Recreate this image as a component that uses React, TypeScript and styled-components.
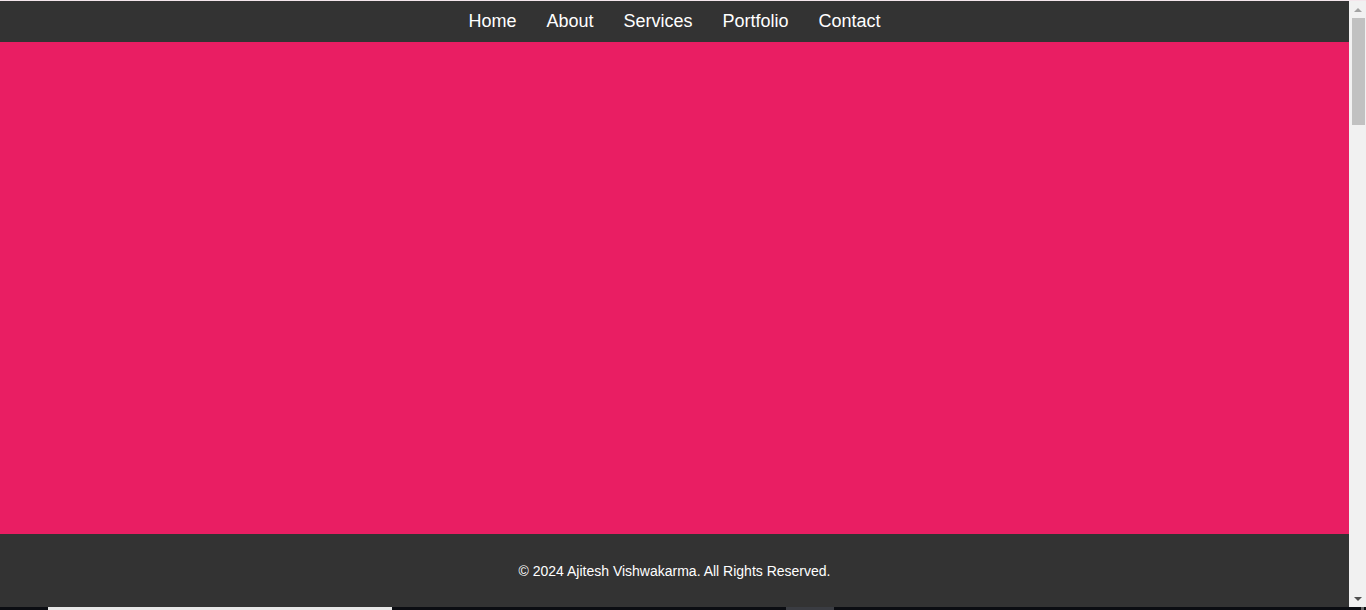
import React from "react";
import styled, { createGlobalStyle } from "styled-components";

const Global = createGlobalStyle`
  html, body {
    margin: 0;
    padding: 0;
    overflow: hidden;
  }
  body {
    font-family: "Liberation Sans", Arial, sans-serif;
    background: #0b0d12;
  }
`;

const Frame = styled.div`
  height: 610px;
  display: flex;
  flex-direction: column;
  overflow: hidden;
`;

const Window = styled.div`
  height: 607px;
  display: flex;
  border-top: 1px solid #f4e6ec;
  box-sizing: border-box;
`;

const Page = styled.main`
  flex: 1;
  display: flex;
  flex-direction: column;
  overflow: hidden;
`;

const Header = styled.header`
  background: #333333;
  height: 41px;
  flex-shrink: 0;
  display: flex;
  justify-content: center;
  align-items: center;
  padding-bottom: 2px;
  box-sizing: border-box;
`;

const Nav = styled.nav`
  display: flex;
  align-items: center;
`;

const NavLink = styled.a`
  color: #ffffff;
  font-size: 18px;
  text-decoration: none;
  padding: 0 15px;
  line-height: 20px;
  cursor: pointer;
`;

const Hero = styled.section`
  background: #e91e63;
  height: 492px;
  flex-shrink: 0;
`;

const Footer = styled.footer`
  background: #333333;
  height: 80px;
  flex-shrink: 0;
  display: flex;
  justify-content: center;
  align-items: flex-start;
  padding-top: 29px;
  box-sizing: border-box;
  color: #ffffff;
  font-size: 14px;
  line-height: 16px;
`;

const Scrollbar = styled.div`
  width: 17px;
  background: #f1f1f1;
  display: flex;
  flex-direction: column;
  align-items: center;
`;

const ArrowBtn = styled.div<{ $down?: boolean }>`
  height: 17px;
  width: 17px;
  display: flex;
  align-items: center;
  justify-content: center;
  flex-shrink: 0;
  &::after {
    content: "";
    width: 0;
    height: 0;
    border-left: 4px solid transparent;
    border-right: 4px solid transparent;
    ${(p) =>
      p.$down
        ? "border-top: 4px solid #505050;"
        : "border-bottom: 4px solid #a3a3a3;"}
  }
`;

const Track = styled.div`
  flex: 1;
  width: 100%;
  display: flex;
  justify-content: center;
`;

const Thumb = styled.div`
  width: 13px;
  height: 107px;
  margin-top: 0px;
  margin-left: 1px;
  background: #c1c1c1;
`;

const Strip = styled.div`
  height: 3px;
  display: flex;
  background: #0b0d12;
`;

const StripBar = styled.div<{ $left: number; $width: number; $color: string }>`
  margin-left: ${(p) => p.$left}px;
  width: ${(p) => p.$width}px;
  background: ${(p) => p.$color};
`;

export default function App() {
  const links = ["Home", "About", "Services", "Portfolio", "Contact"];
  return (
    <>
      <Global />
      <Frame>
        <Window>
          <Page>
            <Header>
              <Nav>
                {links.map((l) => (
                  <NavLink key={l}>{l}</NavLink>
                ))}
              </Nav>
            </Header>
            <Hero />
            <Footer>© 2024 Ajitesh Vishwakarma. All Rights Reserved.</Footer>
          </Page>
          <Scrollbar>
            <ArrowBtn />
            <Track>
              <Thumb />
            </Track>
            <ArrowBtn $down />
          </Scrollbar>
        </Window>
        <Strip>
          <StripBar $left={48} $width={344} $color="#e8e8e8" />
          <StripBar $left={394} $width={48} $color="#3a3c42" />
          <StripBar $left={527} $width={3} $color="#6a6a6a" />
        </Strip>
      </Frame>
    </>
  );
}
